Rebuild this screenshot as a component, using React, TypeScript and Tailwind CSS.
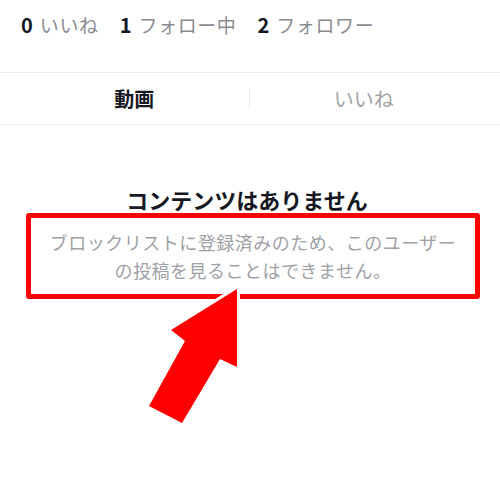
import React from "react"

const jp = { fontFamily: '"Noto Sans CJK JP", "Noto Sans", sans-serif' }

function Stat({ num, label }: { num: string; label: string }) {
  return (
    <div className="flex items-baseline gap-[7px]">
      <span className="text-[20px] font-bold text-[#161823]">{num}</span>
      <span className="text-[19px] text-[#8a8b91] tracking-[0.6px]">{label}</span>
    </div>
  )
}

export default function App() {
  return (
    <div className="relative w-[500px] h-[478px] bg-white overflow-hidden" style={jp}>
      <div className="flex h-[73px] items-start gap-[21px] pl-[21px] pt-[11px] leading-[28px] border-b border-[#ececec]">
        <Stat num="0" label="いいね" />
        <Stat num="1" label="フォロー中" />
        <Stat num="2" label="フォロワー" />
      </div>

      <div className="flex h-[52px] items-center border-b border-[#ececec]">
        <div className="flex flex-1 justify-center pl-[20px] text-[20px] font-bold text-[#161823]">
          動画
        </div>
        <div className="h-[22px] w-px bg-[#ececec]" />
        <div className="flex flex-1 justify-center pr-[22px] text-[20px] text-[#a3a3a8]">
          いいね
        </div>
      </div>

      <div className="flex flex-col items-center pt-[60px]">
        <h2 className="-ml-[6px] text-[22px] font-bold leading-[28px] text-[#161823]">
          コンテンツはありません
        </h2>
        <div className="ml-[26px] mr-[20px] w-[454px] self-start rounded-[3px] border-[5px] border-[#ff0000] pt-[10px] pb-[10px] text-center text-[18px] leading-[28px] tracking-[0.5px] text-[#a0a1a6]">
          ブロックリストに登録済みのため、このユーザー
          <br />
          の投稿を見ることはできません。
        </div>
      </div>

      <svg
        className="pointer-events-none absolute left-0 top-0"
        width="500"
        height="478"
        viewBox="0 0 500 478"
      >
        <polygon
          points="237,289 237,367 220,359 182,423 149,406 185,341 171,330"
          fill="#ff0000"
          stroke="#ffffff"
          strokeWidth="6"
          strokeLinejoin="miter"
          paintOrder="stroke"
        />
      </svg>
    </div>
  )
}
